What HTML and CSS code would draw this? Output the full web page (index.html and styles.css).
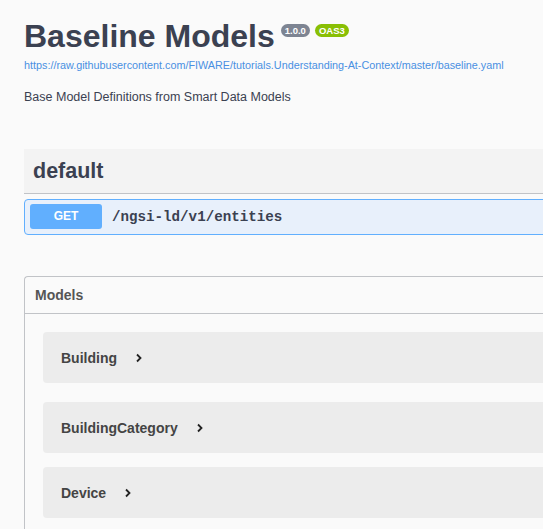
FILE: index.html
```html
<!DOCTYPE html>
<html>
<head>
<meta charset="utf-8">
<link rel="stylesheet" href="styles.css">
</head>
<body>
<div class="page">
  <section class="info">
    <div class="title-row">
      <h1 class="title">Baseline Models</h1>
      <span class="badge badge-version">1.0.0</span>
      <span class="badge badge-oas">OAS3</span>
    </div>
    <a class="url" href="#">https://raw.githubusercontent.com/FIWARE/tutorials.Understanding-At-Context/master/baseline.yaml</a>
    <p class="desc">Base Model Definitions from Smart Data Models</p>
  </section>

  <section class="tag">
    <h3 class="tag-header">default</h3>
    <div class="opblock">
      <span class="method">GET</span>
      <span class="path">/ngsi-ld/v1/entities</span>
    </div>
  </section>

  <section class="models">
    <h4 class="models-header">Models</h4>
    <div class="model-list">
      <div class="model model-first"><span class="model-title">Building</span><svg class="chev" viewBox="0 0 8 10"><polyline points="2,1.5 5.5,5 2,8.5"/></svg></div>
      <div class="model model-second"><span class="model-title">BuildingCategory</span><svg class="chev" viewBox="0 0 8 10"><polyline points="2,1.5 5.5,5 2,8.5"/></svg></div>
      <div class="model model-third"><span class="model-title">Device</span><svg class="chev" viewBox="0 0 8 10"><polyline points="2,1.5 5.5,5 2,8.5"/></svg></div>
    </div>
  </section>
</div>
</body>
</html>
```

FILE: styles.css
```css
html, body {
  margin: 0;
  padding: 0;
  overflow: hidden;
  background: #fafafa;
}
body {
  font-family: "Liberation Sans", Arial, sans-serif;
  color: #3b4151;
}
.page {
  width: 900px;
  padding-left: 24px;
}
.info {
  padding-top: 18px;
}
.title-row {
  display: flex;
  align-items: flex-start;
  height: 36px;
}
.title {
  margin: 0;
  font-size: 32px;
  line-height: 36px;
  font-weight: bold;
  color: #3b4151;
}
.badge {
  margin-top: 6px;
  height: 13px;
  line-height: 13px;
  padding: 0 4px;
  border-radius: 7px;
  font-size: 9.5px;
  font-weight: bold;
  color: #fff;
}
.badge-version {
  margin-left: 6px;
  background: #7d8492;
}
.badge-oas {
  margin-left: 5px;
  background: #89bf04;
}
.url {
  display: block;
  margin-top: 5px;
  font-size: 10.8px;
  line-height: 13px;
  color: #4990e2;
  text-decoration: none;
}
.desc {
  margin: 18px 0 0;
  font-size: 12.5px;
  line-height: 15px;
  color: #3b4151;
}
.tag {
  margin-top: 44px;
}
.tag-header {
  margin: 0;
  height: 44px;
  padding-left: 9px;
  background: #f3f3f3;
  border-bottom: 1px solid #c1c3c7;
  font-size: 21.5px;
  font-weight: bold;
  color: #3b4151;
  display: flex;
  align-items: center;
}
.opblock {
  margin-top: 5px;
  height: 34px;
  border: 1px solid #61affe;
  border-radius: 4px;
  background: #e8f0fb;
  display: flex;
  align-items: center;
  padding: 0 5px;
}
.method {
  width: 72px;
  height: 25px;
  margin-top: -1px;
  border-radius: 3px;
  background: #61affe;
  color: #fff;
  font-size: 12px;
  font-weight: bold;
  line-height: 25px;
  text-align: center;
}
.path {
  padding-left: 10px;
  font-family: "Liberation Mono", "Courier New", monospace;
  font-size: 14.2px;
  font-weight: bold;
  color: #3b4151;
}
.models {
  margin-top: 41px;
  border: 1px solid #c1c3c7;
  border-right: none;
  border-radius: 4px 0 0 4px;
  height: 400px;
}
.models-header {
  margin: 0;
  height: 36px;
  padding-left: 10px;
  border-bottom: 1px solid #c1c3c7;
  font-size: 14px;
  font-weight: bold;
  color: #555;
  display: flex;
  align-items: center;
}
.model-list {
  padding: 18px 0 0 18px;
}
.model {
  height: 51px;
  background: #ececec;
  border-radius: 4px;
  display: flex;
  align-items: center;
  padding-left: 18px;
}
.model-second {
  margin-top: 19px;
}
.model-third {
  margin-top: 14px;
}
.model-title {
  font-size: 14px;
  font-weight: bold;
  color: #444;
}
.chev {
  width: 8px;
  height: 10px;
  margin-left: 18px;
  fill: none;
  stroke: #222;
  stroke-width: 1.8;
}
```
